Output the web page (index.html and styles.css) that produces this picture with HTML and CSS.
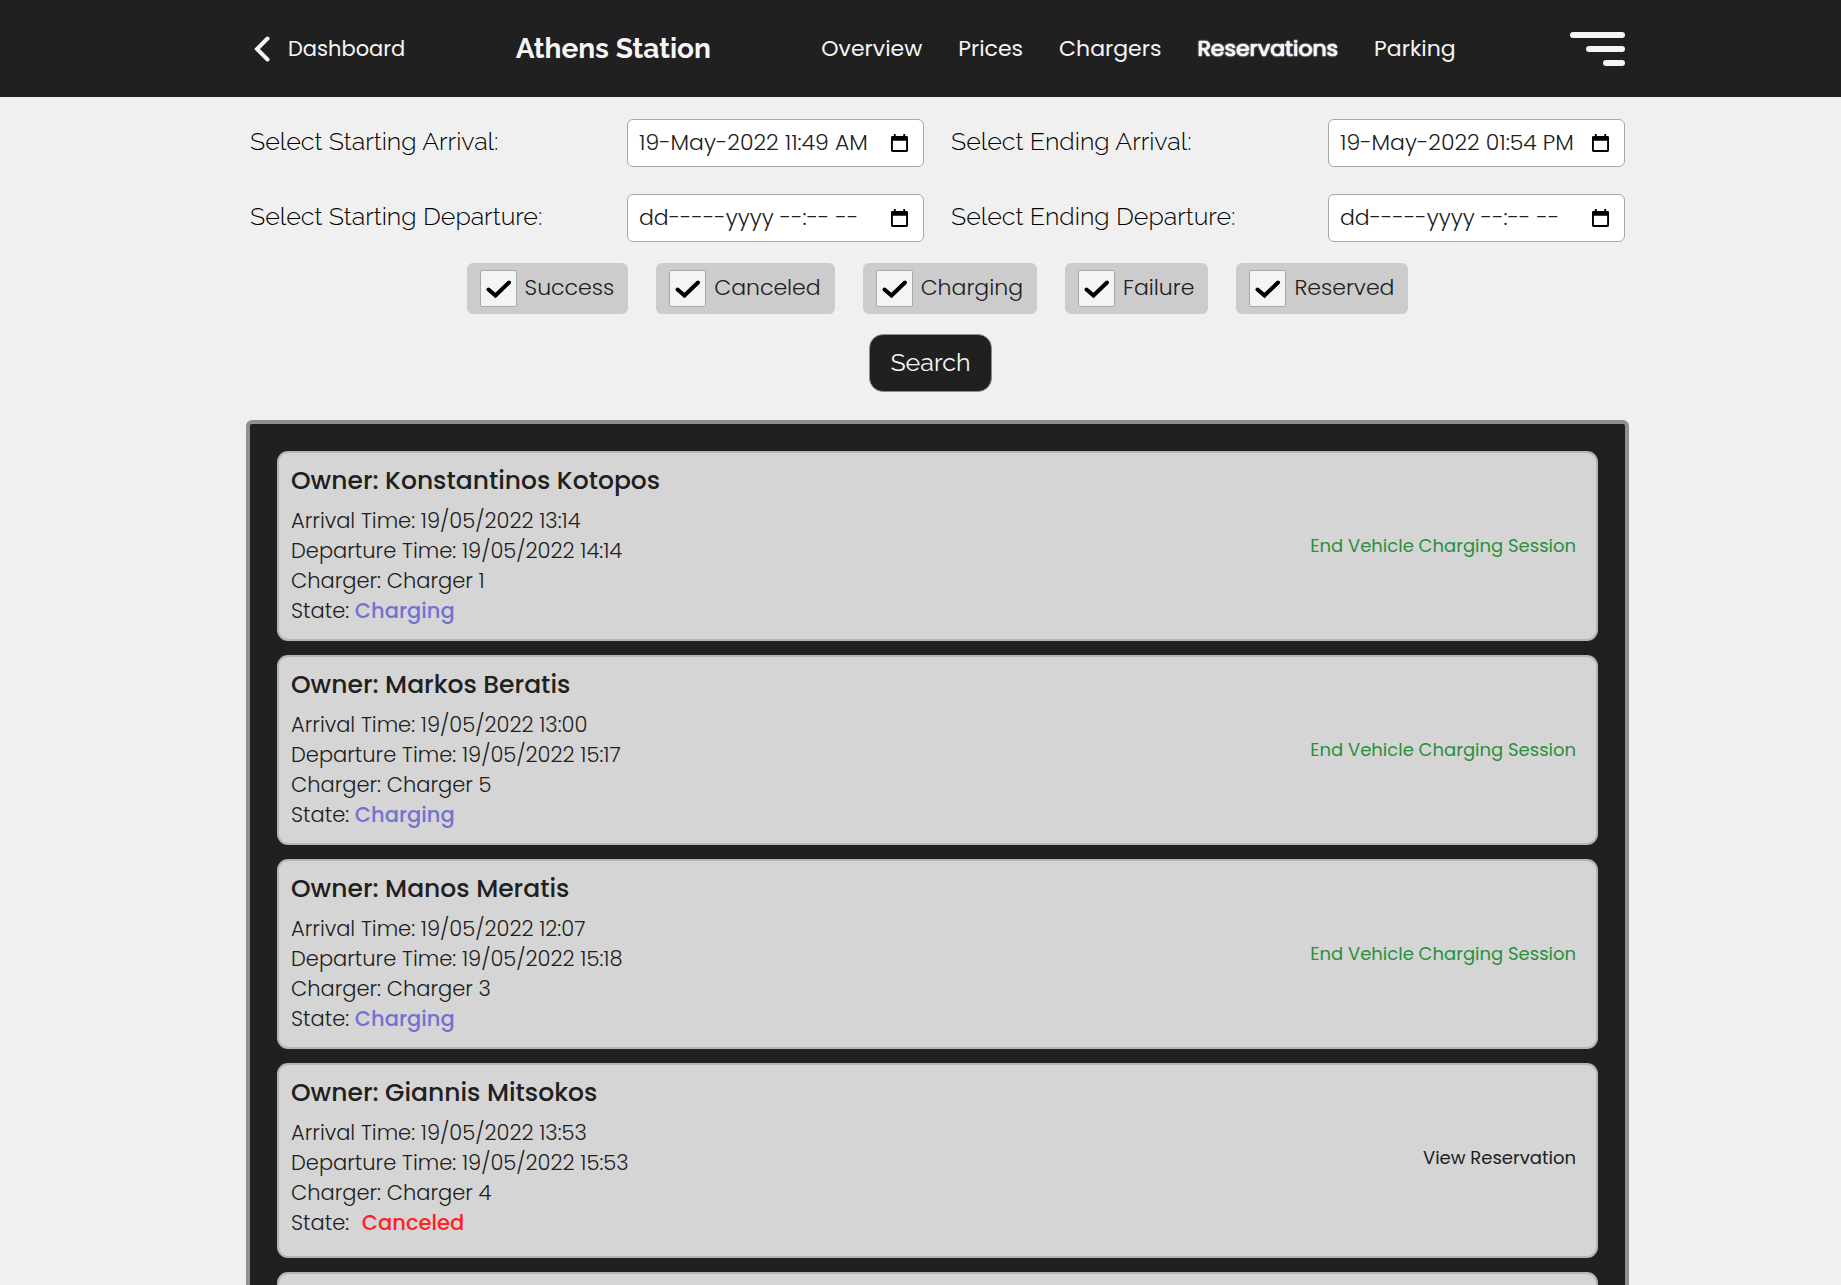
FILE: index.html
```html
<!DOCTYPE html>
<html lang="en">
<head>
<meta charset="utf-8">
<meta name="viewport" content="width=device-width, initial-scale=1">
<title>Athens Station - Reservations</title>
<link rel="stylesheet" href="styles.css">
</head>
<body>
<header class="topbar">
  <a class="back" href="#">
    <svg class="back-icon" viewBox="0 0 16 26" aria-hidden="true"><path d="M13.5 2.5 3 13l10.5 10.5"/></svg>
    <span>Dashboard</span>
  </a>
  <h1 class="title">Athens Station</h1>
  <nav class="nav">
    <a href="#">Overview</a>
    <a href="#">Prices</a>
    <a href="#">Chargers</a>
    <a class="active" href="#">Reservations</a>
    <a href="#">Parking</a>
  </nav>
  <button class="menu" type="button" aria-label="Menu"><span></span><span></span><span></span></button>
</header>

<main class="page">
  <form class="filters">
    <div class="dates">
      <div class="field">
        <label for="arrival-from">Select Starting Arrival:</label>
        <div class="control">
          <input id="arrival-from" type="text" value="19-May-2022 11:49 AM">
          <button type="button" aria-label="Pick date"><svg viewBox="0 0 18 20"><path d="M3 0h2v2h8V0h2v2h1.500a1.500 1.500 0 0 1 1.500 1.500v14a1.500 1.500 0 0 1-1.500 1.500h-15A1.500 1.500 0 0 1 0 17.500v-14A1.500 1.500 0 0 1 1.500 2H3zM2 7v10h14V7z"/></svg></button>
        </div>
      </div>
      <div class="field">
        <label for="arrival-to">Select Ending Arrival:</label>
        <div class="control">
          <input id="arrival-to" type="text" value="19-May-2022 01:54 PM">
          <button type="button" aria-label="Pick date"><svg viewBox="0 0 18 20"><path d="M3 0h2v2h8V0h2v2h1.500a1.500 1.500 0 0 1 1.500 1.500v14a1.500 1.500 0 0 1-1.500 1.500h-15A1.500 1.500 0 0 1 0 17.500v-14A1.500 1.500 0 0 1 1.500 2H3zM2 7v10h14V7z"/></svg></button>
        </div>
      </div>
      <div class="field">
        <label for="departure-from">Select Starting Departure:</label>
        <div class="control">
          <input id="departure-from" type="text" placeholder="dd-----yyyy --:-- --">
          <button type="button" aria-label="Pick date"><svg viewBox="0 0 18 20"><path d="M3 0h2v2h8V0h2v2h1.500a1.500 1.500 0 0 1 1.500 1.500v14a1.500 1.500 0 0 1-1.500 1.500h-15A1.500 1.500 0 0 1 0 17.500v-14A1.500 1.500 0 0 1 1.500 2H3zM2 7v10h14V7z"/></svg></button>
        </div>
      </div>
      <div class="field">
        <label for="departure-to">Select Ending Departure:</label>
        <div class="control">
          <input id="departure-to" type="text" placeholder="dd-----yyyy --:-- --">
          <button type="button" aria-label="Pick date"><svg viewBox="0 0 18 20"><path d="M3 0h2v2h8V0h2v2h1.500a1.500 1.500 0 0 1 1.500 1.500v14a1.500 1.500 0 0 1-1.500 1.500h-15A1.500 1.500 0 0 1 0 17.500v-14A1.500 1.500 0 0 1 1.500 2H3zM2 7v10h14V7z"/></svg></button>
        </div>
      </div>
    </div>
    <div class="states">
      <label class="check"><input type="checkbox" checked><span>Success</span></label>
      <label class="check"><input type="checkbox" checked><span>Canceled</span></label>
      <label class="check"><input type="checkbox" checked><span>Charging</span></label>
      <label class="check"><input type="checkbox" checked><span>Failure</span></label>
      <label class="check"><input type="checkbox" checked><span>Reserved</span></label>
    </div>
    <div class="submit">
      <button class="search" type="button">Search</button>
    </div>
  </form>

  <section class="list" aria-label="Reservations">
    <article class="card">
      <div class="info">
        <h2>Owner: Konstantinos Kotopos</h2>
        <p>Arrival Time: 19/05/2022 13:14</p>
        <p>Departure Time: 19/05/2022 14:14</p>
        <p>Charger: Charger 1</p>
        <p>State: <strong class="charging">Charging</strong></p>
      </div>
      <a class="action end" href="#">End Vehicle Charging Session</a>
    </article>
    <article class="card">
      <div class="info">
        <h2>Owner: Markos Beratis</h2>
        <p>Arrival Time: 19/05/2022 13:00</p>
        <p>Departure Time: 19/05/2022 15:17</p>
        <p>Charger: Charger 5</p>
        <p>State: <strong class="charging">Charging</strong></p>
      </div>
      <a class="action end" href="#">End Vehicle Charging Session</a>
    </article>
    <article class="card">
      <div class="info">
        <h2>Owner: Manos Meratis</h2>
        <p>Arrival Time: 19/05/2022 12:07</p>
        <p>Departure Time: 19/05/2022 15:18</p>
        <p>Charger: Charger 3</p>
        <p>State: <strong class="charging">Charging</strong></p>
      </div>
      <a class="action end" href="#">End Vehicle Charging Session</a>
    </article>
    <article class="card closed">
      <div class="info">
        <h2>Owner: Giannis Mitsokos</h2>
        <p>Arrival Time: 19/05/2022 13:53</p>
        <p>Departure Time: 19/05/2022 15:53</p>
        <p>Charger: Charger 4</p>
        <p>State: <strong class="canceled">Canceled</strong></p>
      </div>
      <a class="action" href="#">View Reservation</a>
    </article>
    <article class="card"></article>
  </section>
</main>
</body>
</html>
```
FILE: styles.css
```css
:root {
  --dark: #202020;
  --light: #f0f0f0;
  --body-font: Poppins, Inter, sans-serif;
  --title-font: Raleway, Lato, sans-serif;
}

* {
  box-sizing: border-box;
}

body {
  display: flex;
  flex-direction: column;
  margin: 0;
  height: 100vh;
  overflow: hidden;
  background: var(--light);
  color: var(--dark);
  font-family: var(--body-font);
  font-weight: 300;
}

a {
  color: inherit;
  text-decoration: none;
}

button {
  padding: 0;
  border: 0;
  background: none;
  cursor: pointer;
}

.topbar {
  display: flex;
  flex: none;
  align-items: center;
  justify-content: space-between;
  height: 97px;
  padding: 0 216px 0 254px;
  background: var(--dark);
  color: #f5f5f5;
  font-size: 21px;
  font-weight: 400;
  white-space: nowrap;
}

.back {
  display: flex;
  align-items: center;
  gap: 18px;
}

.back-icon {
  width: 16px;
  height: 26px;
  fill: none;
  stroke: currentColor;
  stroke-width: 4;
  stroke-linecap: round;
}

.title {
  margin: 0;
  font-family: var(--title-font);
  font-size: 28px;
  font-weight: 700;
}

.nav {
  display: flex;
  gap: 36px;
  font-size: 22px;
}

.nav .active {
  text-shadow: 0 0 1px #fff, 0 0 1px #fff, 0 0 2px #fff;
}

.menu {
  display: flex;
  flex-direction: column;
  align-items: flex-end;
  gap: 8px;
  width: 55px;
  margin-left: 4px;
}

.menu span {
  width: 100%;
  height: 6px;
  border-radius: 3px;
  background: #f5f5f5;
}

.menu span:nth-child(2) {
  width: 70%;
}

.menu span:nth-child(3) {
  width: 40%;
}

.page {
  flex: 1;
  min-height: 0;
  overflow: hidden;
  padding: 22px 212px 0 246px;
}

.filters {
  padding: 0 4px;
}

.dates {
  display: grid;
  grid-template-columns: 1fr 1fr;
  gap: 27px;
}

.field {
  display: flex;
  align-items: flex-start;
  justify-content: space-between;
}

.field label {
  color: #000;
  font-family: var(--title-font);
  font-size: 25px;
  line-height: 45px;
}

.control {
  display: flex;
  align-items: center;
  width: 297px;
  height: 48px;
  padding: 0 15px 0 11px;
  border: 1px solid #a8a8a8;
  border-radius: 6px;
  background: #fff;
}

.control input {
  flex: 1;
  min-width: 0;
  height: 46px;
  padding: 0 0 2px;
  border: 0;
  outline: 0;
  background: none;
  color: var(--dark);
  font: inherit;
  font-size: 22px;
}

.control input::placeholder {
  color: var(--dark);
  opacity: 1;
}

.control svg {
  display: block;
  width: 17px;
  height: 19px;
}

.states {
  display: flex;
  justify-content: center;
  gap: 28px;
  margin-top: 21px;
}

.check {
  display: flex;
  align-items: center;
  gap: 8px;
  height: 51px;
  padding: 0 14px 0 13px;
  border-radius: 6px;
  background: #ccc;
  font-size: 22px;
}

.check span {
  padding-bottom: 2px;
}

.check input {
  appearance: none;
  width: 37px;
  height: 37px;
  margin: 0;
  border: 1px solid #a8a8a8;
  border-radius: 2px;
  background: #f4f4f4;
}

.check input:checked {
  background: #f4f4f4 url("data:image/svg+xml,%3Csvg xmlns='http://www.w3.org/2000/svg' viewBox='0 0 35 35'%3E%3Cpath d='M7.500 18.500l7 6L28 11.500' fill='none' stroke='%23000' stroke-width='4' stroke-linecap='round'/%3E%3C/svg%3E") center / 100% no-repeat;
}

.submit {
  display: flex;
  justify-content: center;
  margin-top: 20px;
  padding-right: 14px;
}

.search {
  width: 123px;
  height: 58px;
  padding-bottom: 2px;
  border: 1px solid #8f8f8f;
  border-radius: 14px;
  background: var(--dark);
  color: #f5f5f5;
  font-family: var(--title-font);
  font-size: 25px;
}

.list {
  display: flex;
  flex-direction: column;
  gap: 14px;
  margin-top: 28px;
  padding: 27px;
  border: 4px solid #8f8f8f;
  border-radius: 6px;
  background: var(--dark);
}

.card {
  display: flex;
  align-items: center;
  justify-content: space-between;
  min-height: 190px;
  padding: 0 20px 0 12px;
  border: 2px solid #b5b5b5;
  border-radius: 11px;
  background: #d5d5d5;
}

.card.closed {
  padding-bottom: 5px;
}

.info {
  padding: 8px 0 13px;
}

.card h2 {
  margin: 0 0 5px;
  font-size: 25px;
  font-weight: 500;
  line-height: 40px;
}

.card p {
  margin: 0;
  font-size: 21px;
  line-height: 30px;
}

.card strong {
  font-weight: 500;
}

.canceled {
  margin-left: 7px;
  color: #ff2222;
}

.charging {
  color: #7272d0;
}

.action {
  padding-bottom: 2px;
  font-size: 18px;
  font-weight: 400;
}

.action.end {
  color: #28903c;
}
```
